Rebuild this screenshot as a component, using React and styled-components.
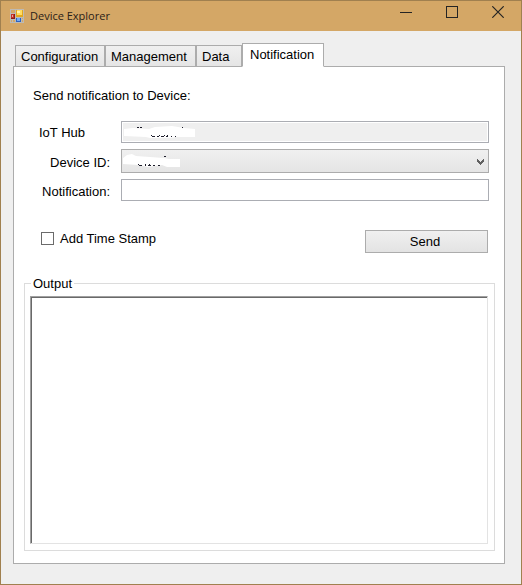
import React, { useState } from "react";
import styled, { createGlobalStyle } from "styled-components";

const GlobalStyle = createGlobalStyle`
  * { box-sizing: border-box; }
  body { margin: 0; }
  body, button, input, select, textarea {
    font: 13px/16px "Liberation Sans", Arial, sans-serif;
    color: #000;
  }
`;

const Window = styled.div`
  display: flex;
  flex-direction: column;
  height: 100vh;
  min-height: 440px;
  border: 1px solid #a0804f;
  background: #efefef;
`;

const TitleBar = styled.header`
  display: flex;
  align-items: center;
  height: 30px;
  padding-left: 9px;
  background: #d4a766;
`;

const Title = styled.h1`
  flex: 1;
  margin: 0 0 0 6px;
  font: 400 11px/16px "Open Sans", "Noto Sans", sans-serif;
  color: #2a2118;
`;

const WindowButton = styled.button`
  display: grid;
  place-items: center;
  align-self: flex-start;
  width: 46px;
  height: 22px;
  padding: 0;
  border: 0;
  background: transparent;
`;

const TabBar = styled.nav`
  display: flex;
  align-items: flex-end;
  margin: 12px 16px -1px 14px;
`;

const Tab = styled.button`
  width: ${(p) => p.$width}px;
  height: ${(p) => (p.$active ? 24 : 22)}px;
  padding: ${(p) => (p.$active ? "0 0 1px 7px" : "1px 0 0 5px")};
  border: 1px solid #acacac;
  border-bottom-color: ${(p) => (p.$active ? "#fff" : "#acacac")};
  background: ${(p) => (p.$active ? "#fff" : "linear-gradient(#f0f0f0, #e5e5e5)")};
  text-align: left;
  white-space: nowrap;
  position: relative;
`;

const Panel = styled.main`
  display: flex;
  flex: 1;
  flex-direction: column;
  margin: 0 16px 20px 12px;
  border: 1px solid #acacac;
  background: #fff;
`;

const Form = styled.form`
  padding: 21px 15px 0 19px;
`;

const Heading = styled.p`
  margin: 0 0 17px;
`;

const Fields = styled.div`
  display: grid;
  grid-template-columns: 78px 1fr;
  gap: 6px 10px;
`;

const FieldLabel = styled.label`
  align-self: center;
  padding: ${(p) => (p.$start ? "1px 0 0 6px" : "4px 1px 0 0")};
  text-align: ${(p) => (p.$start ? "left" : "right")};
`;

const Control = styled.div`
  display: flex;
  position: relative;
`;

const TextInput = styled.input`
  width: 100%;
  height: 22px;
  padding: 2px 4px;
  border: 1px solid #abadb3;
  border-radius: 0;
  background: #fff;

  &:read-only {
    background: #efefef;
    box-shadow: inset 0 0 0 1px #fff;
  }
`;

const Select = styled.select`
  appearance: none;
  width: 100%;
  height: 24px;
  padding: 2px 20px 2px 4px;
  border: 1px solid #acacac;
  border-radius: 0;
  background: linear-gradient(#f0f0f0, #e5e5e5);
`;

const Redaction = styled.svg`
  position: absolute;
  top: 0;
  left: 0;
  pointer-events: none;
`;

const Chevron = styled.svg`
  position: absolute;
  top: 10px;
  right: 5px;
  pointer-events: none;
`;

const Actions = styled.div`
  display: flex;
  align-items: flex-start;
  justify-content: space-between;
  margin-top: 29px;
  padding: 0 1px 0 8px;
`;

const CheckLabel = styled.label`
  display: flex;
  align-items: center;
  gap: 6px;
  line-height: 17px;
`;

const Checkbox = styled.input`
  appearance: none;
  display: grid;
  place-items: center;
  width: 13px;
  height: 13px;
  margin: 0;
  border: 1px solid #6b6b6b;
  background: #fff;

  &:checked::before {
    content: "";
    width: 7px;
    height: 7px;
    background: #333;
  }
`;

const SendButton = styled.button`
  width: 123px;
  height: 23px;
  padding: 0 3px 0 0;
  border: 1px solid #acacac;
  background: linear-gradient(#f0f0f0, #e3e3e3);
`;

const Group = styled.fieldset`
  display: flex;
  flex: 1;
  min-width: 0;
  margin: 22px 9px 12px 10px;
  padding: 4px 6px 6px 5px;
  border: 1px solid #dcdcdc;
`;

const Legend = styled.legend`
  margin-left: 1px;
  padding: 1px 2px 0;
`;

const Output = styled.textarea`
  flex: 1;
  height: 100%;
  resize: none;
  padding: 3px;
  border: 1px solid #e3e3e3;
  border-top-color: #a0a0a0;
  border-left-color: #a0a0a0;
  border-radius: 0;
  background: #fff;
  box-shadow: inset 1px 1px 0 #696969;
  outline: none;
`;

function AppIcon() {
  return (
    <svg width="14" height="14" viewBox="0 0 14 14" shapeRendering="crispEdges" aria-hidden="true">
      <path fill="#bdbab5" d="M0 0h14v14H0z" />
      <path fill="#d4a766" d="M1 1h4v3H1zM1 11h1v2H1zM3 11h2v2H3zM12 9h1v1h-1zM12 11h1v2h-1z" />
      <path fill="#e3a81e" d="M6 1h7v7H6z" />
      <path fill="#ffdc62" d="M7 1h5v5H7z" />
      <path fill="#fff3ad" d="M7 2h3v2H7z" />
      <path fill="#8d1c14" d="M1 5h4v5H1z" />
      <path fill="#c63227" d="M1 5h3v4H1z" />
      <path fill="#e9a49c" d="M2 6h1v2H2z" />
      <path fill="#2d62bf" d="M6 9h5v4H6z" />
      <path fill="#73a9f4" d="M7 9h3v3H7z" />
    </svg>
  );
}

const tabs = [
  { name: "Configuration", width: 90 },
  { name: "Management", width: 91 },
  { name: "Data", width: 46 },
  { name: "Notification", width: 82 },
];

export default function App() {
  const [active, setActive] = useState("Notification");

  return (
    <>
      <GlobalStyle />
      <Window>
        <TitleBar>
          <AppIcon />
          <Title>Device Explorer</Title>
          <WindowButton aria-label="Minimize">
            <svg width="12" height="12" shapeRendering="crispEdges">
              <path d="M0 6.5h12" stroke="#242424" />
            </svg>
          </WindowButton>
          <WindowButton aria-label="Maximize">
            <svg width="12" height="12" shapeRendering="crispEdges">
              <path d="M.5.5h11v11H.5z" fill="none" stroke="#242424" />
            </svg>
          </WindowButton>
          <WindowButton aria-label="Close">
            <svg width="12" height="12">
              <path d="M.3.3l11.4 11.4M11.7.3L.3 11.7" stroke="#242424" strokeWidth="1.2" />
            </svg>
          </WindowButton>
        </TitleBar>

        <TabBar role="tablist">
          {tabs.map((tab) => (
            <Tab
              key={tab.name}
              role="tab"
              aria-selected={active === tab.name}
              $active={active === tab.name}
              $width={tab.width}
              onClick={() => setActive(tab.name)}
            >
              {tab.name}
            </Tab>
          ))}
        </TabBar>

        <Panel>
          <Form onSubmit={(e) => e.preventDefault()}>
            <Heading>Send notification to Device:</Heading>
            <Fields>
              <FieldLabel htmlFor="hub" $start>IoT Hub</FieldLabel>
              <Control>
                <TextInput id="hub" readOnly />
                <Redaction width="80" height="22" aria-hidden="true">
                  <path fill="#fff" d="M3 8l9-1 16 1 6-2 17-1 12 2 11 1v8H55l-5 1H29l-4-1-22-1z" />
                  <path
                    stroke="#1d1d2b"
                    shapeRendering="crispEdges"
                    d="M16 6.5h2M19 6.5h2M61 6.5h1M30 14.5h1M38 14.5h1M43 14.5h1M46 14.5h1M31 15.5h3M36 15.5h2M40 15.5h3M45 15.5h2M50 15.5h1M54 15.5h1"
                  />
                </Redaction>
              </Control>

              <FieldLabel htmlFor="device">Device ID:</FieldLabel>
              <Control>
                <Select id="device" />
                <Redaction width="80" height="24" aria-hidden="true">
                  <path fill="#fff" d="M2 9l4-3 5-1 4 2 14 1 14 1 5 1 11 0v8H46l-5-2-14 2-9-2-16-1z" />
                  <path
                    stroke="#1d1d2b"
                    shapeRendering="crispEdges"
                    d="M43 7.5h2M17 15.5h1M24 15.5h1M28 15.5h1M18 16.5h3M24 16.5h1M27 16.5h3M32 16.5h2M37 16.5h2"
                  />
                </Redaction>
                <Chevron width="7" height="6" shapeRendering="crispEdges" aria-hidden="true">
                  <path d="M0 0h1v1h1v1h1v1h1V2h1V1h1V0h1v3H6v1H5v1H4v1H3V5H2V4H1V3H0z" fill="#606060" />
                </Chevron>
              </Control>

              <FieldLabel htmlFor="notification">Notification:</FieldLabel>
              <Control>
                <TextInput id="notification" />
              </Control>
            </Fields>

            <Actions>
              <CheckLabel>
                <Checkbox type="checkbox" />
                Add Time Stamp
              </CheckLabel>
              <SendButton type="submit">Send</SendButton>
            </Actions>
          </Form>

          <Group>
            <Legend>Output</Legend>
            <Output aria-label="Output" readOnly />
          </Group>
        </Panel>
      </Window>
    </>
  );
}
